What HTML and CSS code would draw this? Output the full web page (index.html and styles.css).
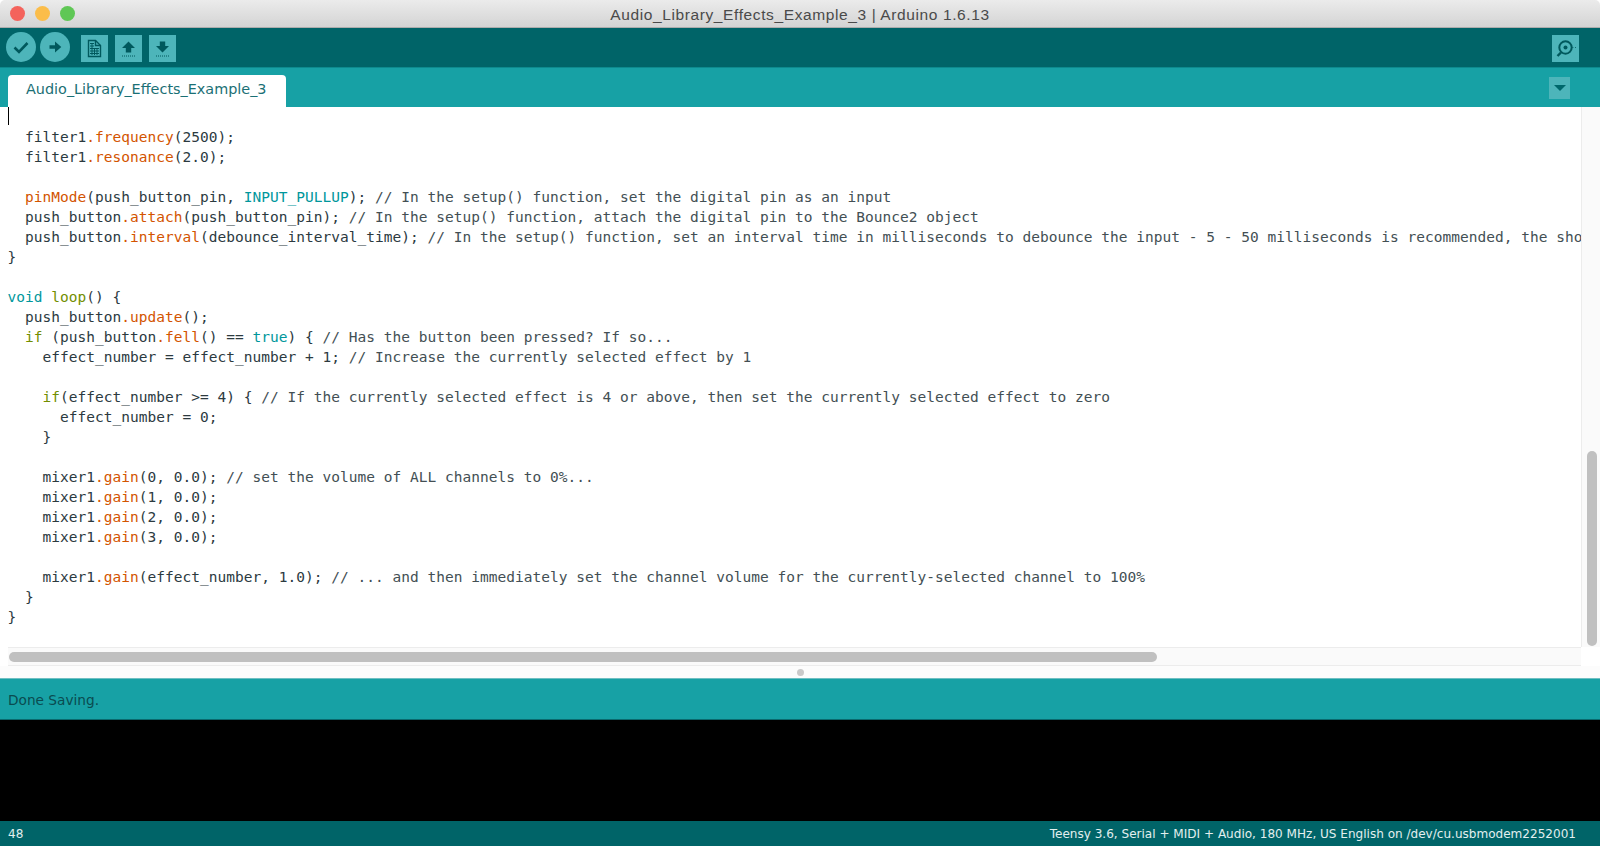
FILE: index.html
```html
<!DOCTYPE html>
<html lang="en">
<head>
<meta charset="utf-8">
<title>Audio_Library_Effects_Example_3 | Arduino 1.6.13</title>
<link rel="stylesheet" href="styles.css">
</head>
<body>
<div class="window">
  <header class="titlebar">
    <div class="lights">
      <span class="light red"></span>
      <span class="light yellow"></span>
      <span class="light green"></span>
    </div>
    <div class="title">Audio_Library_Effects_Example_3 | Arduino 1.6.13</div>
  </header>

  <div class="toolbar">
    <button class="btn round" aria-label="Verify">
      <svg width="30" height="30" viewBox="0 0 30 30"><path d="M8.5 15.5l4.5 4.5 8.5-9" fill="none" stroke="#00595d" stroke-width="2.6"/></svg>
    </button>
    <button class="btn round second" aria-label="Upload">
      <svg width="30" height="30" viewBox="0 0 30 30"><path d="M9.5 13.2h5.5V9.5l6.3 5.5-6.3 5.5v-3.7H9.5z" fill="#00595d"/></svg>
    </button>
    <button class="btn square first" aria-label="New">
      <svg width="27" height="27" viewBox="0 0 27 27"><path d="M7.5 5.5h7l5 5v11h-12z" fill="#4db5ba" stroke="#00595d" stroke-width="1.4"/><path d="M14.5 5.5v5h5" fill="none" stroke="#00595d" stroke-width="1.4"/><path d="M9 8.5h4M9 11h4M9 13.500h9M9 16h9M9 18.500h9M11 8v12M13.500 13v7M16 13v7" stroke="#00595d" stroke-width="1" fill="none"/></svg>
    </button>
    <button class="btn square" aria-label="Open">
      <svg width="27" height="27" viewBox="0 0 27 27"><path d="M13.500 6.500l6.500 6.500h-3.800v4.500h-5.400v-4.500H7z" fill="#00595d"/><path d="M7 21h13" stroke="#00595d" stroke-width="1" stroke-dasharray="1 1" fill="none"/></svg>
    </button>
    <button class="btn square" aria-label="Save">
      <svg width="27" height="27" viewBox="0 0 27 27"><path d="M13.500 17.500l6.500-6.500h-3.800V6.500h-5.400V11H7z" fill="#00595d"/><path d="M7 21h13" stroke="#00595d" stroke-width="1" stroke-dasharray="1 1" fill="none"/></svg>
    </button>
    <button class="btn square monitor" aria-label="Serial Monitor">
      <svg width="27" height="27" viewBox="0 0 27 27"><circle cx="13.500" cy="12.500" r="6.200" fill="none" stroke="#00595d" stroke-width="2"/><circle cx="13.500" cy="12.500" r="2" fill="#00595d"/><path d="M9 17.500l-3.500 3.500" stroke="#00595d" stroke-width="2.400" fill="none"/><path d="M20.500 12.500h.8M23 12.500h.8" stroke="#00595d" stroke-width="1" fill="none"/></svg>
    </button>
  </div>

  <div class="tabbar">
    <div class="tab">Audio_Library_Effects_Example_3</div>
    <button class="tabmenu" aria-label="Tab menu"><span class="tri"></span></button>
  </div>

  <div class="editor">
    <div class="editor-main">
      <div class="code-area">
        <span class="caret"></span>
<pre class="code"><code>
  filter1<span class="o">.frequency</span>(2500);
  filter1<span class="o">.resonance</span>(2.0);

  <span class="o">pinMode</span>(push_button_pin, <span class="t">INPUT_PULLUP</span>); <span class="c">// In the setup() function, set the digital pin as an input</span>
  push_button<span class="o">.attach</span>(push_button_pin); <span class="c">// In the setup() function, attach the digital pin to the Bounce2 object</span>
  push_button<span class="o">.interval</span>(debounce_interval_time); <span class="c">// In the setup() function, set an interval time in milliseconds to debounce the input - 5 - 50 milliseconds is recommended, the shorter the better</span>
}

<span class="t">void</span> <span class="k">loop</span>() {
  push_button<span class="o">.update</span>();
  <span class="k">if</span> (push_button<span class="o">.fell</span>() == <span class="t">true</span>) { <span class="c">// Has the button been pressed? If so...</span>
    effect_number = effect_number + 1; <span class="c">// Increase the currently selected effect by 1</span>

    <span class="k">if</span>(effect_number &gt;= 4) { <span class="c">// If the currently selected effect is 4 or above, then set the currently selected effect to zero</span>
      effect_number = 0;
    }

    mixer1<span class="o">.gain</span>(0, 0.0); <span class="c">// set the volume of ALL channels to 0%...</span>
    mixer1<span class="o">.gain</span>(1, 0.0);
    mixer1<span class="o">.gain</span>(2, 0.0);
    mixer1<span class="o">.gain</span>(3, 0.0);

    mixer1<span class="o">.gain</span>(effect_number, 1.0); <span class="c">// ... and then immediately set the channel volume for the currently-selected channel to 100%</span>
  }
}</code></pre>
      </div>
      <div class="vscroll"><div class="vthumb"></div></div>
    </div>
    <div class="hscroll-row">
      <div class="hscroll"><div class="hthumb"></div></div>
      <div class="corner"></div>
    </div>
  </div>

  <div class="divider"><span class="grip"></span></div>
  <div class="status">Done Saving.</div>
  <div class="console"></div>
  <footer class="footer">
    <span class="line-no">48</span>
    <span class="board">Teensy 3.6, Serial + MIDI + Audio, 180 MHz, US English on /dev/cu.usbmodem2252001</span>
  </footer>
</div>
</body>
</html>
```

FILE: styles.css
```css
* { box-sizing: border-box; }
html, body { margin: 0; padding: 0; height: 100%; overflow: hidden; background: #fff; }
.window { width: 1600px; height: 846px; display: flex; flex-direction: column; font-family: "DejaVu Sans", sans-serif; }

.titlebar { height: 28px; flex: none; display: flex; align-items: center; position: relative; background: linear-gradient(#ebebeb, #d4d4d4); border-bottom: 1px solid #adadad; border-radius: 5px 5px 0 0; }
.lights { display: flex; gap: 10px; padding-left: 10px; }
.light { width: 15px; height: 15px; border-radius: 50%; }
.red { background: #f4635c; }
.yellow { background: #fbbd4a; }
.green { background: #5fc755; }
.title { position: absolute; left: 0; right: 0; top: 5px; text-align: center; font: 15.5px/20px "Liberation Sans", Arial, sans-serif; letter-spacing: .61px; color: #4a4a4a; }

.toolbar { height: 39px; flex: none; background: #006468; display: flex; align-items: center; padding-left: 6px; padding-right: 21px; }
.btn { border: 0; padding: 0; background: #4db5ba; display: block; }
.btn svg { display: block; }
.round { width: 30px; height: 30px; border-radius: 50%; margin-top: -1px; }
.second { margin-left: 4px; }
.square { width: 27px; height: 27px; margin-left: 7px; margin-top: 1px; }
.first { margin-left: 11px; }
.monitor { margin-left: auto; }

.tabbar { height: 40px; flex: none; background: #17a1a5; display: flex; align-items: flex-end; padding-left: 8px; padding-right: 30px; border-top: 1px solid #0d8a8e; border-bottom: 2px solid #17a1a5; position: relative; }
.tab { width: 278px; height: 32px; margin-bottom: -2px; background: #fff; border-radius: 4px 4px 0 0; padding-left: 18px; font-size: 14.4px; line-height: 28px; color: #1b7075; white-space: nowrap; }
.tabmenu { margin-left: auto; align-self: flex-start; margin-top: 9px; width: 21px; height: 22px; border: 0; padding: 0; background: #4db5ba; display: flex; align-items: center; justify-content: center; }
.tri { width: 0; height: 0; border-left: 6px solid transparent; border-right: 6px solid transparent; border-top: 6px solid #00686c; }

.editor { height: 559px; flex: none; display: flex; flex-direction: column; background: #fff; }
.editor-main { height: 540px; flex: none; display: flex; }
.code-area { width: 1581px; flex: none; overflow: hidden; position: relative; }
.caret { position: absolute; left: 8px; top: 0; width: 1px; height: 18px; background: #000; }
.code { margin: 0; padding: 0 0 0 7.5px; font-family: "DejaVu Sans Mono", monospace; font-size: 14.5px; line-height: 20px; color: #2c3a3f; white-space: pre; }
.code code { font: inherit; letter-spacing: .02px; }
.o { color: #d35400; }
.t { color: #00979c; }
.k { color: #728e00; }
.c { color: #434f54; }

.vscroll { width: 19px; flex: none; background: #fafafa; border-left: 1px solid #ececec; position: relative; }
.vthumb { position: absolute; left: 5px; top: 344px; width: 10px; height: 195px; border-radius: 5px; background: #c0c0c0; }

.hscroll-row { height: 19px; flex: none; display: flex; padding-left: 8px; background: #fff; }
.hscroll { flex: 1; background: #fafafa; border-top: 1px solid #ececec; border-bottom: 1px solid #ececec; position: relative; }
.hthumb { position: absolute; left: 1px; top: 4px; width: 1148px; height: 10px; border-radius: 5px; background: #c0c0c0; }
.corner { width: 19px; flex: none; background: #fff; }

.divider { height: 12px; flex: none; background: #fcfcfc; display: flex; align-items: center; justify-content: center; }
.grip { width: 7px; height: 7px; border-radius: 50%; background: #c9c9c9; }

.status { height: 42px; flex: none; background: #17a1a5; border-top: 1px solid #6fbfc2; border-bottom: 1px solid #0a6a6e; padding-left: 8px; font-size: 13.7px; line-height: 43px; color: #0a4c50; }
.console { height: 101px; flex: none; background: #000; }
.footer { height: 25px; flex: none; background: #006468; display: flex; justify-content: space-between; align-items: center; padding: 1px 24px 0 8px; font-size: 12.05px; color: #e3efef; }
```
